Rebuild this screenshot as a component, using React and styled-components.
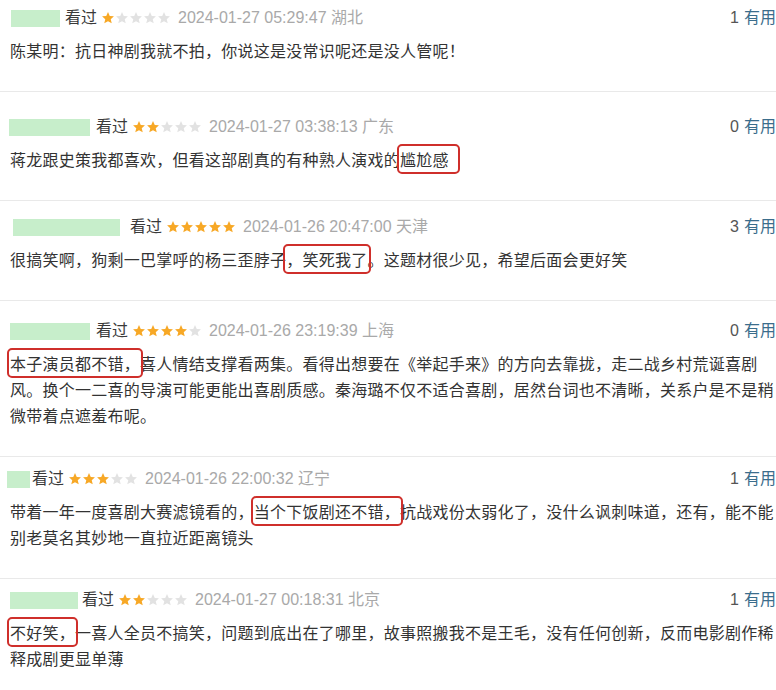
import React from 'react';
import styled, { createGlobalStyle } from 'styled-components';

const GlobalStyle = createGlobalStyle`
  body {
    margin: 0;
    background: #fff;
    font-family: "Liberation Sans", "Noto Sans CJK SC", sans-serif;
  }
`;

const List = styled.div`
  width: 776px;
  background: #fff;
`;

const Item = styled.div`
  padding: ${(p) => p.$pt}px 0 28px 0;
  border-top: ${(p) => (p.$first ? 'none' : '1px solid #e9e9e9')};
`;

const Header = styled.div`
  display: flex;
  align-items: center;
  height: 20px;
  font-size: 16px;
  line-height: 20px;
`;

const Name = styled.span`
  display: inline-block;
  width: ${(p) => p.$w}px;
  height: 17px;
  margin-left: ${(p) => p.$x}px;
  margin-right: ${(p) => p.$gap}px;
  background: #c7eecb;
`;

const Watched = styled.span`
  color: #3a3a3a;
  margin-right: 4px;
`;

const Stars = styled.span`
  display: inline-flex;
  margin-right: 7px;
`;

const Meta = styled.span`
  color: #a9a9a9;
`;

const Useful = styled.span`
  margin-left: auto;
  color: #555;
  white-space: nowrap;
`;

const UsefulLink = styled.span`
  color: #3b6d8c;
  margin-left: 5px;
`;

const Body = styled.p`
  margin: 9px 0 0 0;
  padding-left: 10px;
  font-family: "Noto Sans CJK SC", "Liberation Sans", sans-serif;
  font-size: 16px;
  letter-spacing: 0.25px;
  line-height: 26px;
  color: #333;
`;

const Mark = styled.span`
  outline: 2px solid #cf2f2b;
  outline-offset: ${(p) => p.$off || 1}px;
  border-radius: 2px;
  padding-right: ${(p) => p.$pr || 0}px;
`;

const Star = ({ on }) => (
  <svg width="14" height="14" viewBox="0 0 24 24">
    <path
      d="M12 1.8l3 6.7 7.2.7-5.5 4.8 1.7 7.2L12 17.4l-6.4 3.8 1.7-7.2L1.8 9.2 9 8.5z"
      fill={on ? '#f7a826' : '#e2e2e2'}
    />
  </svg>
);

const comments = [
  {
    pt: 8, x: 11, w: 49, gap: 5, rating: 1, time: '2024-01-27 05:29:47 湖北', useful: 1,
    body: ['陈某明：抗日神剧我就不拍，你说这是没常识呢还是没人管呢！'],
  },
  {
    pt: 25, x: 9, w: 81, gap: 6, rating: 2, time: '2024-01-27 03:38:13 广东', useful: 0,
    body: ['蒋龙跟史策我都喜欢，但看这部剧真的有种熟人演戏的', { mark: '尴尬感', pr: 8 }],
  },
  {
    pt: 16, x: 13, w: 107, gap: 10, rating: 5, time: '2024-01-26 20:47:00 天津', useful: 3,
    body: ['很搞笑啊，狗剩一巴掌呼的杨三歪脖子', { mark: '，笑死我了' }, '。这题材很少见，希望后面会更好笑'],
  },
  {
    pt: 20, x: 10, w: 80, gap: 6, rating: 4, time: '2024-01-26 23:19:39 上海', useful: 0,
    body: [
      { mark: '本子演员都不错，' },
      '喜人情结支撑看两集。看得出想要在《举起手来》的方向去靠拢，走二战乡村荒诞喜剧风。换个一二喜的导演可能更能出喜剧质感。秦海璐不仅不适合喜剧，居然台词也不清晰，关系户是不是稍微带着点遮羞布呢。',
    ],
  },
  {
    pt: 12, x: 7, w: 23, gap: 2, rating: 3, time: '2024-01-26 22:00:32 辽宁', useful: 1,
    body: [
      '带着一年一度喜剧大赛滤镜看的，',
      { mark: '当个下饭剧还不错，' },
      '抗战戏份太弱化了，没什么讽刺味道，还有，能不能别老莫名其妙地一直拉近距离镜头',
    ],
  },
  {
    pt: 11, x: 10, w: 68, gap: 4, rating: 2, time: '2024-01-27 00:18:31 北京', useful: 1,
    body: [
      { mark: '不好笑，' },
      '一喜人全员不搞笑，问题到底出在了哪里，故事照搬我不是王毛，没有任何创新，反而电影剧作稀释成剧更显单薄',
    ],
  },
];

export default function App() {
  return (
    <List>
      <GlobalStyle />
      {comments.map((c, i) => (
        <Item key={i} $pt={c.pt} $first={i === 0}>
          <Header>
            <Name $x={c.x} $w={c.w} $gap={c.gap} />
            <Watched>看过</Watched>
            <Stars>
              {[0, 1, 2, 3, 4].map((n) => (
                <Star key={n} on={n < c.rating} />
              ))}
            </Stars>
            <Meta>{c.time}</Meta>
            <Useful>
              {c.useful}
              <UsefulLink>有用</UsefulLink>
            </Useful>
          </Header>
          <Body>
            {c.body.map((part, j) =>
              typeof part === 'string' ? (
                <React.Fragment key={j}>{part}</React.Fragment>
              ) : (
                <Mark key={j} $pr={part.pr}>{part.mark}</Mark>
              )
            )}
          </Body>
        </Item>
      ))}
    </List>
  );
}
